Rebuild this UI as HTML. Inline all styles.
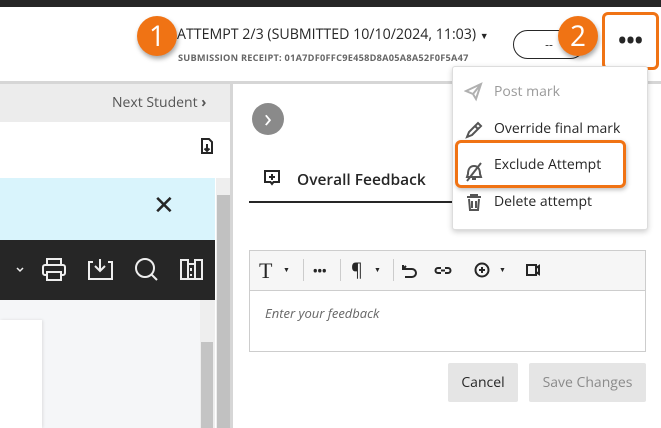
<!DOCTYPE html>
<html><head><style>
*{box-sizing:border-box;margin:0;padding:0}
body{width:661px;height:428px;position:relative;overflow:hidden;background:#fff;font-family:"Open Sans","Liberation Sans",sans-serif;color:#262626}
.a{position:absolute}
.badge{position:absolute;width:40px;height:40px;border-radius:50%;background:#f07314;color:#fff;font-size:28px;text-align:center;line-height:40px;box-shadow:1px 3px 5px rgba(0,0,0,.35)}
.mi{position:absolute;left:494px;font-size:14px;color:#262626}
</style></head><body>
<div class="a" style="left:0;top:0;width:661px;height:7px;background:#262626"></div>
<div class="a" style="left:0;top:81px;width:661px;height:3px;background:#d6d6d6"></div>
<div class="a" style="left:177px;top:25px;font-size:14.2px;color:#262626;white-space:nowrap">ATTEMPT 2/3 (SUBMITTED 10/10/2024, 11:03) <span style="font-size:9px">▼</span></div>
<div class="a" style="left:178px;top:51px;font-size:9.2px;font-weight:bold;color:#666;letter-spacing:.25px;white-space:nowrap">SUBMISSION RECEIPT: 01A7DF0FFC9E458D8A05A8A52F0F5A47</div>
<div class="a" style="left:513px;top:30px;width:72px;height:29px;border:1px solid #262626;border-radius:15px;text-align:center;font-size:12px;line-height:27px">--</div>
<div class="badge" style="left:137px;top:16px">1</div>
<div class="badge" style="left:558px;top:16px">2</div>
<div class="a" style="left:602px;top:12px;width:57px;height:58px;border:3px solid #f07314;border-radius:6px;text-align:center;line-height:50px;font-size:22px;font-weight:bold">•••</div>
<!-- left panel -->
<div class="a" style="left:0;top:84px;width:232px;height:38px;background:#ececec"></div>
<div class="a" style="left:112px;top:93px;font-size:14px;color:#555">Next Student <b>›</b></div>
<svg class="a" style="left:199px;top:138px" width="16" height="16" viewBox="0 0 16 16"><path d="M3 1h7l3 3v11H3z M8 6v7 M5.5 10.5L8 13l2.5-2.5" fill="none" stroke="#262626" stroke-width="2"/></svg>
<div class="a" style="left:0;top:178px;width:215px;height:62px;background:#d9f4fc"></div>
<div class="a" style="left:153px;top:190px;font-size:26px;line-height:28px;font-weight:300">✕</div>
<div class="a" style="left:216px;top:178px;width:16px;height:250px;background:#eee"></div>
<div class="a" style="left:217px;top:195px;width:13px;height:233px;background:#c1c1c1"></div>
<div class="a" style="left:230px;top:84px;width:3px;height:344px;background:#d6d6d6"></div>
<div class="a" style="left:0;top:240px;width:215px;height:60px;background:#262626"></div>
<svg class="a" style="left:0;top:240px" width="215" height="60" viewBox="0 0 215 60" fill="none" stroke="#eee" stroke-width="2">
<path d="M17 28l3 3 3-3" stroke-width="1.5"/>
<rect x="43" y="25" width="22" height="10" rx="2"/><rect x="47" y="19" width="14" height="6"/><rect x="47" y="32" width="14" height="8" fill="#262626"/>
<path d="M93 22h-4v17h23V22h-4 M100 19v12 M95 26l5 5 5-5"/>
<circle cx="145" cy="28" r="9"/><path d="M151 34l6 6"/>
<path d="M181 20h7v19h-7z M188 24h7v15h-7z M195 20h7v19h-7z M191 28v3 M191 34v2"/>
</svg>
<div class="a" style="left:0;top:300px;width:200px;height:128px;background:#f5f6f8"></div>
<div class="a" style="left:0;top:320px;width:42px;height:108px;background:#fff;box-shadow:1px 0 3px rgba(0,0,0,.1)"></div>
<div class="a" style="left:200px;top:300px;width:15px;height:128px;background:#eee"></div>
<div class="a" style="left:201px;top:342px;width:12px;height:86px;background:#c4c4c4"></div>
<!-- right panel -->
<div class="a" style="left:252px;top:103px;width:32px;height:32px;border-radius:50%;background:#8a8a8a;color:#fff;text-align:center;line-height:28px;font-size:26px">›</div>
<svg class="a" style="left:264px;top:170px" width="16" height="16" viewBox="0 0 16 16"><path d="M1 1h14v11H9.5L8 14l-1.5-2H1z M8 4v6 M5 7h6" fill="none" stroke="#262626" stroke-width="2"/></svg>
<div class="a" style="left:297px;top:168px;font-size:15.5px;font-weight:600">Overall Feedback</div>
<div class="a" style="left:249px;top:201px;width:206px;height:2px;background:#262626"></div>
<div class="a" style="left:249px;top:250px;width:397px;height:102px;border:1px solid #cdcdcd"></div>
<div class="a" style="left:250px;top:251px;width:395px;height:40px;background:#f6f6f6;border-bottom:1px solid #cdcdcd"></div>
<div class="a" style="left:259px;top:259px;font-family:'Liberation Serif',serif;font-size:22px;line-height:24px">T</div>
<div class="a" style="left:283px;top:266px;font-size:7px">▼</div>
<div class="a" style="left:303px;top:259px;width:1px;height:22px;background:#ccc"></div>
<div class="a" style="left:313px;top:262px;font-size:12px;font-weight:bold">•••</div>
<div class="a" style="left:340px;top:259px;width:1px;height:22px;background:#ccc"></div>
<div class="a" style="left:351px;top:259px;font-size:18px;line-height:22px">¶</div>
<div class="a" style="left:374px;top:266px;font-size:7px">▼</div>
<div class="a" style="left:393px;top:259px;width:1px;height:22px;background:#ccc"></div>
<svg class="a" style="left:400px;top:262px" width="140" height="16" viewBox="0 0 140 16" fill="none" stroke="#262626" stroke-width="2">
<path d="M3 3v4h9a4 4 0 010 8H5 M3 7l3-3"/>
<path d="M41 6h-3a2.5 2.5 0 000 5h3 M45 6h3a2.5 2.5 0 010 5h-3 M41 8.5h4"/>
<circle cx="82" cy="8" r="6.5"/><path d="M82 5v6 M79 8h6"/>
<rect x="127" y="3" width="9" height="10"/><path d="M136 6l3-2v8l-3-2"/>
</svg>
<div class="a" style="left:499px;top:266px;font-size:7px">▼</div>
<div class="a" style="left:265px;top:304px;font-size:13px;font-style:italic;color:#666">Enter your feedback</div>
<div class="a" style="left:448px;top:363px;width:70px;height:39px;background:#e5e5e5;border-radius:2px;text-align:center;line-height:39px;font-size:14px">Cancel</div>
<div class="a" style="left:529px;top:363px;width:117px;height:39px;background:#e5e5e5;border-radius:2px;text-align:center;line-height:39px;font-size:14px;color:#8a8a8a">Save Changes</div>
<!-- dropdown -->
<div class="a" style="left:452px;top:66px;width:196px;height:164px;background:#fff;border:1px solid #ddd;border-radius:3px;box-shadow:0 2px 6px rgba(0,0,0,.2)"></div>
<svg class="a" style="left:464px;top:82px" width="20" height="140" viewBox="0 0 20 140" fill="none" stroke-width="2">
<path d="M2 9L17 2l-5 15-3-5z M9 12l8-10" stroke="#b0b0b0"/>
<path d="M3 55l2-5 9-9 3 3-9 9z M11 44l3 3" stroke="#555"/>
<path d="M4 92c0-6 3-8 6-8s6 2 6 8l1 3H3z M8 97h4 M3 99L17 81" stroke="#555"/>
<path d="M3 115h14 M7 115v-2h6v2 M5 117l1 11h8l1-11 M8 119v7 M12 119v7" stroke="#555"/>
</svg>
<div class="mi" style="top:82px;color:#9a9a9a">Post mark</div>
<div class="mi" style="top:119px">Override final mark</div>
<div class="mi" style="top:155px">Exclude Attempt</div>
<div class="mi" style="top:192px">Delete attempt</div>
<div class="a" style="left:455px;top:140px;width:171px;height:48px;border:3px solid #f07314;border-radius:6px;box-shadow:1px 2px 4px rgba(0,0,0,.25)"></div>
</body></html>
